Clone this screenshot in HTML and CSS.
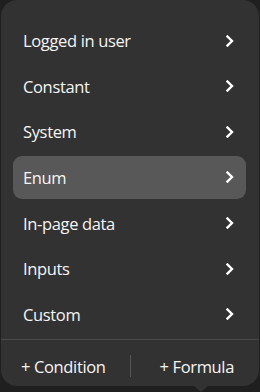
FILE: index.html
```html
<!DOCTYPE html>
<html lang="en">
<head>
    <meta charset="UTF-8">
    <meta name="viewport" content="width=device-width, initial-scale=1.0">
    <title>Value source menu</title>
    <link rel="stylesheet" href="styles.css">
</head>
<body>
    <div class="popover">
        <ul class="menu">
            <li class="menu-item">Logged in user <svg class="chev" viewBox="0 0 8 12"><polyline points="1.5,1.5 6,6 1.5,10.5"/></svg></li>
            <li class="menu-item">Constant <svg class="chev" viewBox="0 0 8 12"><polyline points="1.5,1.5 6,6 1.5,10.5"/></svg></li>
            <li class="menu-item">System <svg class="chev" viewBox="0 0 8 12"><polyline points="1.5,1.5 6,6 1.5,10.5"/></svg></li>
            <li class="menu-item active">Enum <svg class="chev" viewBox="0 0 8 12"><polyline points="1.5,1.5 6,6 1.5,10.5"/></svg></li>
            <li class="menu-item">In-page data <svg class="chev" viewBox="0 0 8 12"><polyline points="1.5,1.5 6,6 1.5,10.5"/></svg></li>
            <li class="menu-item">Inputs <svg class="chev" viewBox="0 0 8 12"><polyline points="1.5,1.5 6,6 1.5,10.5"/></svg></li>
            <li class="menu-item">Custom <svg class="chev" viewBox="0 0 8 12"><polyline points="1.5,1.5 6,6 1.5,10.5"/></svg></li>
        </ul>
        <div class="footer">
            <button class="footer-btn">+ Condition</button>
            <span class="sep"></span>
            <button class="footer-btn">+ Formula</button>
        </div>
        <span class="pointer"></span>
    </div>
</body>
</html>
```

FILE: styles.css
```css
body {
    margin: 0;
    background: #1f1f1f;
    font-family: "Open Sans", "Noto Sans", sans-serif;
    color: #f5f5f5;
    height: 392px;
    overflow: hidden;
}
.popover {
    position: relative;
    margin-left: 1px;
    width: 258px;
    height: 386px;
    background: #323232;
    border-radius: 16px;
    display: flex;
    flex-direction: column;
}
.menu {
    list-style: none;
    margin: 0;
    padding: 19px 13px 0 12px;
    display: flex;
    flex-direction: column;
    gap: 2.67px;
}
.menu-item {
    height: 43px;
    display: flex;
    align-items: center;
    justify-content: space-between;
    padding: 0 12px 0 10px;
    border-radius: 9px;
    font-size: 16.5px;
    letter-spacing: -0.35px;
}
.menu-item.active {
    background: #585858;
}
.chev {
    width: 8px;
    height: 12px;
    fill: none;
    stroke: #ffffff;
    stroke-width: 2.4;
    stroke-linecap: square;
}
.footer {
    margin-top: auto;
    border-top: 1px solid #4a4a4a;
    height: 47px;
    display: flex;
    align-items: center;
    padding-top: 6px;
    box-sizing: border-box;
}
.footer-btn {
    flex: 1;
    background: none;
    border: none;
    color: #f5f5f5;
    font-family: inherit;
    font-size: 16.5px;
    letter-spacing: -0.35px;
    padding: 0;
}
.footer-btn:first-child {
    padding-right: 4px;
}
.footer-btn:last-child {
    padding-left: 4px;
}
.sep {
    width: 1px;
    height: 22px;
    background: #555555;
}
.pointer {
    position: absolute;
    left: 193px;
    bottom: -6px;
    width: 0;
    height: 0;
    border-left: 7px solid transparent;
    border-right: 7px solid transparent;
    border-top: 6px solid #323232;
}
```
